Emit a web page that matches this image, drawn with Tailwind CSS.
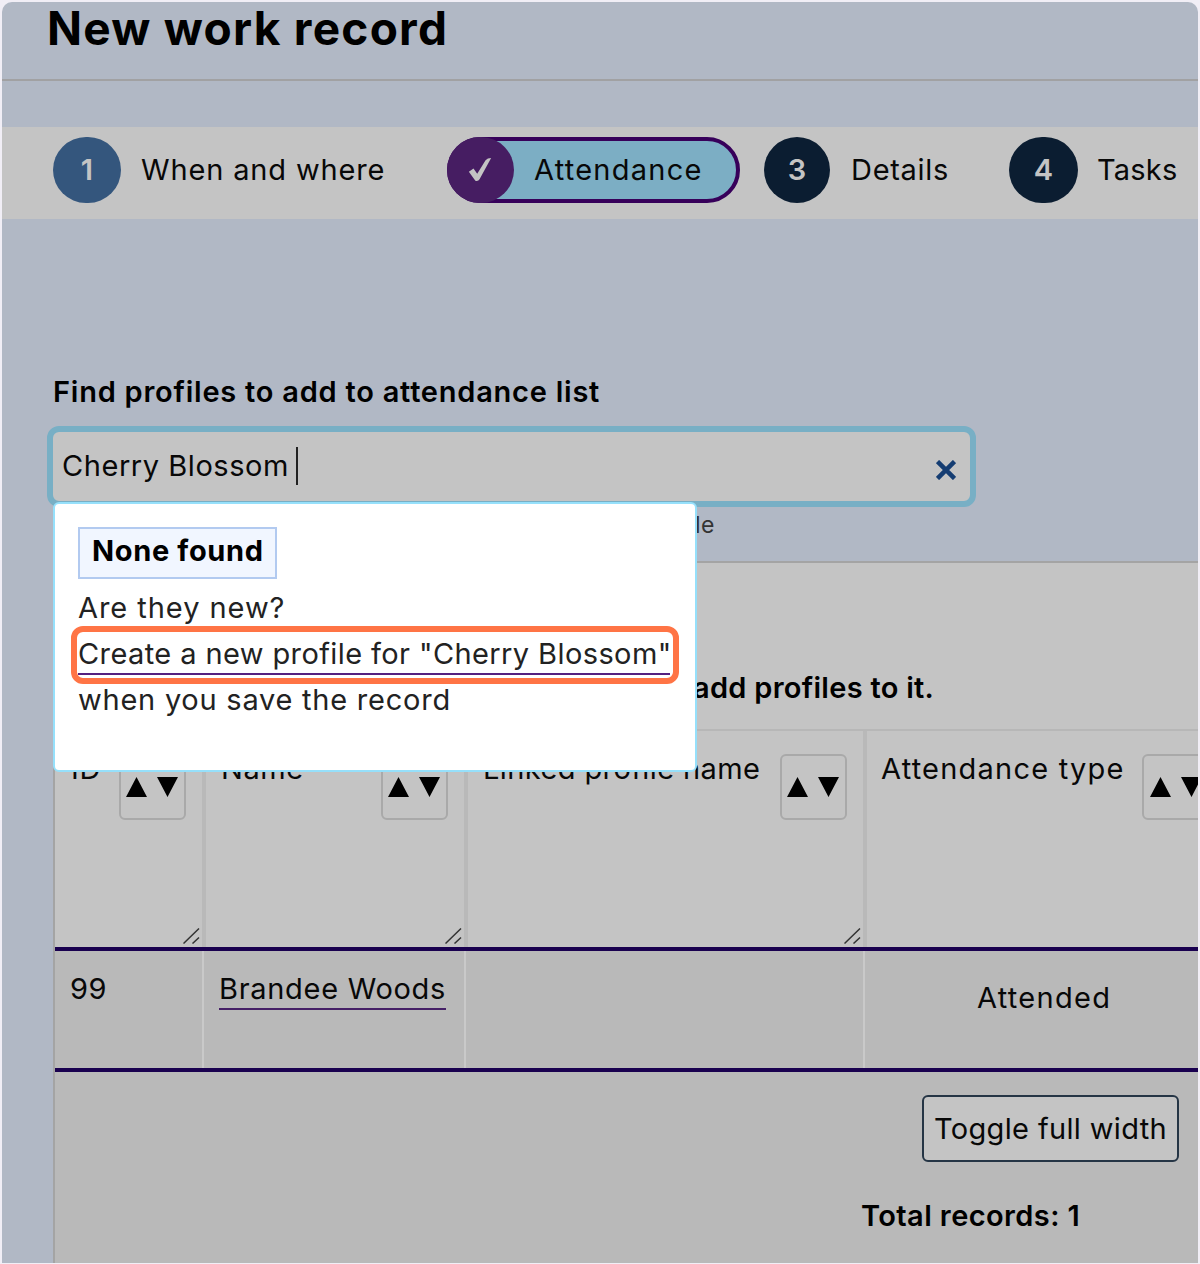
<!DOCTYPE html>
<html lang="en">
<head>
<meta charset="utf-8">
<title>New work record</title>
<script src="https://cdn.jsdelivr.net/npm/@tailwindcss/browser@4"></script>
</head>
<body class="h-[1264px] w-[1200px] overflow-hidden bg-[#f1eef6] p-0.5 pb-px font-['Inter',sans-serif] text-[29px] leading-[36px] whitespace-nowrap text-[#080808]">
<div class="relative h-[1261px] w-[1196px] rounded-tl-[10px] rounded-tr-[10px] bg-[#b1b8c5]">

  <!-- Page heading -->
  <header class="h-[79px] border-b-2 border-[#a1a1a3] pl-[42px]">
    <h1 class="pl-[3px] text-[46px] leading-[52px] font-bold tracking-[1.25px] text-black">New work record</h1>
  </header>

  <!-- Stepper -->
  <nav class="mt-[46px] flex h-[92px] items-start bg-[#c4c4c4] pt-2.5 pl-[51px]">
    <div class="flex w-[394px] items-center">
      <span class="flex h-[66px] w-[68px] items-center justify-center rounded-full bg-[#34567d] font-semibold text-[#c4c4c4]">1</span>
      <span class="ml-5 tracking-[0.85px]">When and where</span>
    </div>
    <div class="flex h-[66px] w-[293px] items-center rounded-full border-4 border-[#37005a] bg-[#7caec4]">
      <span class="-ml-1 flex h-[66px] w-[67px] shrink-0 items-center justify-center rounded-full bg-[#461d62]">
        <svg class="-ml-0.5 h-[26px] w-[26px]" viewBox="0 0 28 28" fill="#c4c4c4"><path d="M2 16 L7 12.500 L11 18 L20 3.500 Q22 1 26 1 L13.500 24 Q12 26.500 9 25.500 Z"/></svg>
      </span>
      <span class="ml-[20px] tracking-[1.25px]">Attendance</span>
    </div>
    <div class="ml-6 flex w-[245px] items-center">
      <span class="flex h-[66px] w-[66px] items-center justify-center rounded-full bg-[#0b1d31] font-semibold text-[#c4c4c4]">3</span>
      <span class="ml-[21px] tracking-[0.7px]">Details</span>
    </div>
    <div class="flex items-center">
      <span class="flex h-[66px] w-[69px] items-center justify-center rounded-full bg-[#0b1d31] font-semibold text-[#c4c4c4]">4</span>
      <span class="ml-[19px] tracking-[0.2px]">Tasks</span>
    </div>
  </nav>

  <!-- Profile search -->
  <section class="relative z-10 h-[342px] pt-[155px] pl-[45px]">
    <label class="block pl-[6px] font-semibold tracking-[0.76px] text-black">Find profiles to add to attendance list</label>
    <div class="mt-4 flex h-[81px] w-[929px] items-center rounded-xl border-[6px] border-[#78afc5] bg-[#c4c4c4] pr-[14px] pl-[9px]">
      <span class="-mt-0.5 w-[227px] tracking-[0.55px]">Cherry Blossom</span>
      <span class="-mt-0.5 ml-[7px] h-[38px] w-0.5 bg-[#222]"></span>
      <svg class="mt-[7px] ml-auto h-5 w-5" viewBox="0 0 20 20" stroke="#153d72" stroke-width="4.500"><path d="M1.500 1.500 L18.500 18.500 M18.500 1.500 L1.500 18.500"/></svg>
    </div>
    <p class="-mt-0.5 pl-[648px] text-[23px] leading-[40px] tracking-[0.5px] text-[#333]">le</p>

    <!-- Suggestions menu -->
    <div class="absolute top-[283px] left-[51px] h-[270px] w-[644px] rounded-md border-2 border-[#96e0fb] bg-white pt-[23px] pl-[23px] text-[#222]">
      <div class="flex h-[52px] w-[199px] items-center border-2 border-[#b2caf0] bg-[#f1f6ff] pb-1 pl-[12px] font-bold tracking-[0.65px] text-black">None found</div>
      <p class="mt-[11px] tracking-[0.95px]">Are they new?</p>
      <div class="-ml-[7px] h-[58px] w-[608px] rounded-xl border-[6px] border-[#ff7445] pl-px">
        <a class="block h-[43px] w-[592px] border-b-2 border-[#552080] leading-[43px] tracking-[0.4px]">Create a new profile for "Cherry Blossom"</a>
      </div>
      <p class="-mt-[2px] tracking-[0.76px]">when you save the record</p>
    </div>
  </section>

  <!-- Attendance list -->
  <section class="ml-[51px] h-[702px] w-[1145px] border-t-2 border-l-2 border-[#a4a4a4] bg-[#c4c4c4]">
    <p class="h-[166px] pt-[107px] pl-[638px] font-semibold tracking-[0.28px] text-black">add profiles to it.</p>
    <div class="grid h-[218px] grid-cols-[151px_262px_399px_331px] border-t-2 border-[#b7b7b7]">
      <div class="relative border-r-4 border-[#b9b9b9] pt-[20px] pl-[16px]">
        <span class="tracking-[0.7px]">ID</span>
        <span class="absolute top-[23px] left-[64px] flex h-[66px] w-[67px] items-center justify-center rounded-md border-2 border-[#a9a9a9] pr-[2px]">
          <svg class="h-5 w-[52px]" viewBox="0 0 52 20"><path d="M0 20 L10.500 0 L21 20 Z M31 0 H52 L41.500 20 Z"/></svg>
        </span>
        <svg class="absolute right-0.5 bottom-[3px] h-4 w-[17px]" viewBox="0 0 17 16" stroke="#333" stroke-width="1.500"><path d="M0.500 15.500 L16 0.500 M9.500 15.500 L16 9.500"/></svg>
      </div>
      <div class="relative border-r-4 border-[#b9b9b9] pt-[20px] pl-[15px]">
        <span class="tracking-[0.55px]">Name</span>
        <span class="absolute top-[23px] left-[175px] flex h-[66px] w-[67px] items-center justify-center rounded-md border-2 border-[#a9a9a9] pr-[2px]">
          <svg class="h-5 w-[52px]" viewBox="0 0 52 20"><path d="M0 20 L10.500 0 L21 20 Z M31 0 H52 L41.500 20 Z"/></svg>
        </span>
        <svg class="absolute right-0.5 bottom-[3px] h-4 w-[17px]" viewBox="0 0 17 16" stroke="#333" stroke-width="1.500"><path d="M0.500 15.500 L16 0.500 M9.500 15.500 L16 9.500"/></svg>
      </div>
      <div class="relative border-r-4 border-[#b9b9b9] pt-[20px] pl-[15px]">
        <span class="tracking-[0.4px]">Linked profile name</span>
        <span class="absolute top-[23px] left-[312px] flex h-[66px] w-[67px] items-center justify-center rounded-md border-2 border-[#a9a9a9] pr-[2px]">
          <svg class="h-5 w-[52px]" viewBox="0 0 52 20"><path d="M0 20 L10.500 0 L21 20 Z M31 0 H52 L41.500 20 Z"/></svg>
        </span>
        <svg class="absolute right-0.5 bottom-[3px] h-4 w-[17px]" viewBox="0 0 17 16" stroke="#333" stroke-width="1.500"><path d="M0.500 15.500 L16 0.500 M9.500 15.500 L16 9.500"/></svg>
      </div>
      <div class="relative overflow-hidden pt-[20px] pl-[14px]">
        <span class="tracking-[1.22px]">Attendance type</span>
        <span class="absolute top-[23px] left-[275px] flex h-[66px] w-[67px] items-center justify-center rounded-md border-2 border-[#a9a9a9]">
          <svg class="h-5 w-[52px]" viewBox="0 0 52 20"><path d="M0 20 L10.500 0 L21 20 Z M31 0 H52 L41.500 20 Z"/></svg>
        </span>
      </div>
    </div>
    <div class="grid h-[125px] grid-cols-[149px_262px_399px_333px] bg-[#b9b9b9]">
      <div class="border-y-4 border-[#19004f]"><div class="h-full border-r-2 border-[#c9c9c9] pt-[20px] pl-[15px] tracking-[0.5px]">99</div></div>
      <div class="border-y-4 border-[#19004f]"><div class="h-full border-r-2 border-[#c9c9c9] pt-[20px] pl-[15px]"><a class="block h-[39px] w-[227px] border-b-2 border-[#452066] tracking-[0.7px]">Brandee Woods</a></div></div>
      <div class="border-y-4 border-[#19004f]"><div class="h-full border-r-2 border-[#c9c9c9]"></div></div>
      <div class="border-y-4 border-[#19004f] pt-[29px] pl-[112px] tracking-[1.3px]">Attended</div>
    </div>
    <div class="h-[191px] bg-[#b9b9b9] pt-[23px]">
      <div class="ml-[867px] flex h-[67px] w-[257px] items-center justify-center rounded-md border-2 border-[#253545] bg-[#c4c4c4] tracking-[0.35px]">Toggle full width</div>
      <p class="mt-9 ml-[806px] font-semibold tracking-[0.4px] text-black">Total records: 1</p>
    </div>
  </section>
</div>
</body>
</html>
